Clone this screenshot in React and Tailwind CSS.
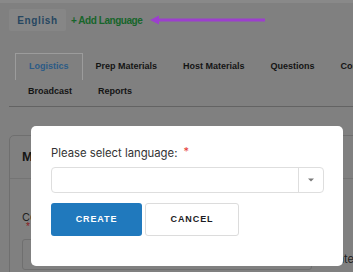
import React from 'react';

const tabsTop = ['Logistics', 'Prep Materials', 'Host Materials', 'Questions', 'Content'];
const tabsBottom = ['Broadcast', 'Reports'];

const Tab = ({ label, active }) => (
    <div
        className={
            'px-[13px] flex items-center text-[9px] font-bold whitespace-nowrap ' +
            (active
                ? 'h-[27px] border border-b-0 border-[#9c9c9c] text-[#2c5b86]'
                : 'text-[#141414]')
        }
    >
        {label}
    </div>
);

const App = () => {
    return (
        <div className="relative w-[353px] h-[272px] overflow-hidden bg-[#808080] font-['Liberation_Sans',Arial,sans-serif]">
            {/* lighter strip at the very top */}
            <div className="h-[3px] bg-[#898989]" />

            {/* language bar */}
            <div className="flex items-center mt-[6px] pl-[9px]">
                <div className="w-[57px] h-[22px] flex items-center justify-center bg-[#868686] rounded-[2px] text-[10px] font-bold tracking-[0.6px] text-[#274761]">
                    English
                </div>
                <div className="ml-[5px] text-[10px] font-bold tracking-[-0.45px] text-[#17652a]">+ Add Language</div>
                <svg className="ml-[8px]" width="116" height="10" viewBox="0 0 116 10">
                    <line x1="6" y1="5" x2="115" y2="5" stroke="#9c3fcd" strokeWidth="3" />
                    <polygon points="0,5 9,0.5 9,9.5" fill="#9c3fcd" />
                </svg>
            </div>

            {/* tabs */}
            <div className="mt-[22px] mx-[9px] border-b border-[#636363] w-[430px]">
                <div className="pl-[6px] flex h-[27px] items-center">
                    {tabsTop.map((t, i) => (
                        <Tab key={t} label={t} active={i === 0} />
                    ))}
                </div>
                <div className="pl-[6px] flex h-[26px] items-center pb-[2px]">
                    {tabsBottom.map((t) => (
                        <Tab key={t} label={t} />
                    ))}
                </div>
            </div>

            {/* card behind the dialog */}
            <div className="mt-[28px] ml-[9px] w-[420px] h-[200px] border border-[#6f6f6f] rounded-tl-[5px]">
                <div className="h-[43px] border-b border-[#747474] pl-[12px] flex items-center text-[13px] font-bold text-[#151515]">
                    Meeting
                </div>
                <div className="flex">
                    <div className="w-[320px] pl-[12px] pt-[32px]">
                        <div className="text-[11px] text-[#222] font-['Inter',sans-serif] leading-[12px]">Contact</div>
                        <div className="ml-[4px] text-[10px] text-[#8a1a1a] leading-[8px]">*</div>
                        <div className="mt-[8px] w-[290px] h-[31px] border border-[#6f6f6f] rounded-[3px]" />
                    </div>
                    <div className="pt-[72px] text-[11px] text-[#222] font-['Inter',sans-serif]">Date</div>
                </div>
            </div>

            {/* dialog */}
            <div className="absolute left-[31px] top-[126px] w-[312px] h-[140px] bg-white rounded-[5px] px-[20px] pt-[20px] font-['Inter',sans-serif]">
                <div className="flex items-start text-[11.3px] leading-[14px] text-[#333]">
                    <span>Please select language:</span>
                    <span className="ml-[6px] text-[#e53935] text-[11px] leading-[10px]">*</span>
                </div>
                <div className="mt-[7px] w-[273px] h-[26px] border border-[#dedede] rounded-[4px] flex">
                    <div className="flex-1" />
                    <div className="w-[25px] border-l border-[#dedede] flex items-center justify-center">
                        <svg width="6" height="4" viewBox="0 0 6 4">
                            <polygon points="0,0.5 6,0.5 3,3.5" fill="#7a7a7a" />
                        </svg>
                    </div>
                </div>
                <div className="mt-[10px] flex">
                    <button className="w-[91px] h-[33px] bg-[#2079bd] rounded-[3px] text-white text-[9px] font-bold tracking-[0.9px] font-['Liberation_Sans',Arial,sans-serif]">
                        CREATE
                    </button>
                    <button className="ml-[3px] w-[94px] h-[33px] bg-white border border-[#dcdcdc] rounded-[3px] text-[#1c1c24] text-[9px] font-bold tracking-[0.9px] font-['Liberation_Sans',Arial,sans-serif]">
                        CANCEL
                    </button>
                </div>
            </div>
        </div>
    );
};

export default App;
